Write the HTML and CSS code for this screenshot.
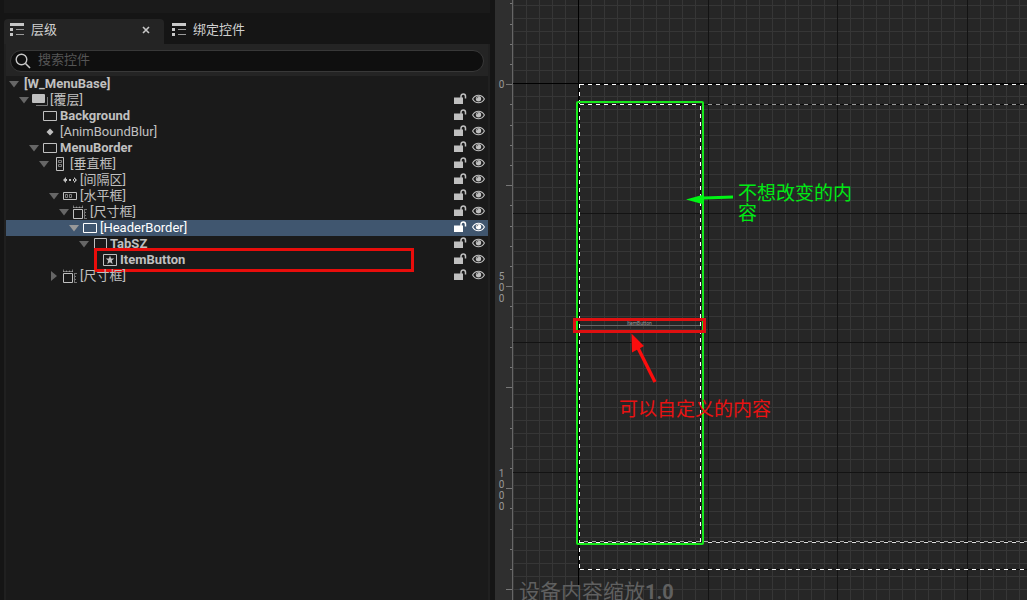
FILE: index.html
```html
<!DOCTYPE html>
<html lang="zh-CN">
<head>
<meta charset="utf-8">
<title>W_MenuBase</title>
<link rel="stylesheet" href="styles.css">
</head>
<body>
<svg class="defs" aria-hidden="true">
  <symbol id="list" viewBox="0 0 14 14"><path d="M0 0h14v3H0zM0 5h3v3H0zM0 10h3v3H0z" fill="#c8c8c8"/><path d="M6 6h8v1H6zM6 11h8v1H6z" fill="#999"/></symbol>
  <symbol id="down" viewBox="0 0 10 7"><path d="M0 0h10L5 6.500z" fill="currentColor"/></symbol>
  <symbol id="right" viewBox="0 0 10 10"><path d="M2 0v10l6-5z" fill="currentColor"/></symbol>
  <symbol id="border" viewBox="0 0 16 14"><path d="M1.500 2.500h13v9h-13z" fill="none" stroke="currentColor"/></symbol>
  <symbol id="overlay" viewBox="0 0 16 14"><rect y="1" width="13" height="9" rx="1" fill="currentColor"/><path d="M15.500 4v8.500H4" fill="none" stroke="#777"/></symbol>
  <symbol id="dot" viewBox="0 0 16 14"><path d="M8 3.500l3.500 3.500L8 10.500 4.500 7z" fill="currentColor"/></symbol>
  <symbol id="vbox" viewBox="0 0 16 14"><g fill="none" stroke="currentColor"><path d="M4.500.5h7v13h-7z"/><path d="M6.500 3.500h3v2h-3zM6.500 7.500h3v2h-3z" opacity=".6"/></g></symbol>
  <symbol id="hbox" viewBox="0 0 16 14"><g fill="none" stroke="currentColor"><path d="M1.500 3.500h13v7h-13z"/><path d="M3.500 5.500h2v3h-2zM7.500 5.500h2v3h-2z" opacity=".6"/></g></symbol>
  <symbol id="spacer" viewBox="0 0 16 14"><path d="M1 7l3-3v6zM15 7l-3-3v6zM3 6h2v2H3zM11 6h2v2h-2zM7 6h2v2H7z" fill="currentColor"/></symbol>
  <symbol id="sizebox" viewBox="0 0 16 14"><g fill="none" stroke="currentColor"><path d="M1.500 4.500h9v9h-9z"/><path d="M1.500 3V.5M4.500 3V1.500M7.500 3V1.500M10.500 3V.5M1 2.500h10M12.500 4v10M13 4.500h2M13 7.500h1M13 10.500h1M13 13.500h2" opacity=".55"/></g></symbol>
  <symbol id="frame" viewBox="0 0 16 14"><path d="M2.500 1.500h12v12h-12z" fill="none" stroke="currentColor"/></symbol>
  <symbol id="user" viewBox="0 0 16 14"><path d="M1.500 1.500h13v11h-13z" fill="none" stroke="currentColor"/><path d="M8 2.500l1.100 3 3.100.1-2.400 1.900.9 3.500L8 9.200 5.300 11l.9-3.500-2.400-1.900 3.100-.1z" fill="currentColor"/></symbol>
  <symbol id="lock" viewBox="0 0 13 11"><path d="M0 4.500h9V11H0z" fill="currentColor"/><path d="M7 5V3.200C7 1.600 8 .9 9.300.9s2.200.7 2.200 2.300v2.300" fill="none" stroke="currentColor" stroke-width="1.500"/></symbol>
  <symbol id="eye" viewBox="0 0 13 10"><path d="M.6 5C2 2.400 4 1.200 6.500 1.200S11 2.400 12.400 5C11 7.600 9 8.800 6.500 8.800S2 7.600.6 5z" fill="none" stroke="currentColor" stroke-width="1.100"/><circle cx="6.500" cy="4.800" r="2.700" fill="currentColor"/><path d="M4.800 4.400c.1-.9.700-1.500 1.600-1.600" fill="none" stroke="#333" stroke-width=".7"/></symbol>
</svg>

<main class="editor">
  <section class="side">
    <div class="strip"></div>
    <nav class="tabs">
      <div class="tab active">
        <button class="tab-name"><svg class="tab-icon"><use href="#list"/></svg>层级</button>
        <button class="close" aria-label="关闭"><svg class="close-icon" viewBox="0 0 8 8"><path d="M1 1l6 6M7 1L1 7" stroke="#c8c8c8" stroke-width="1.600"/></svg></button>
      </div>
      <div class="tab"><button class="tab-name"><svg class="tab-icon"><use href="#list"/></svg>绑定控件</button></div>
    </nav>
    <div class="panel">
      <label class="search">
        <svg class="search-icon" viewBox="0 0 16 16"><circle cx="6.500" cy="6.500" r="5.300" fill="none" stroke="#c8c8c8" stroke-width="1.400"/><path d="M10.500 10.500L15 15" stroke="#c8c8c8" stroke-width="1.600"/></svg>
        <input type="text" placeholder="搜索控件" aria-label="搜索控件">
      </label>
      <ul class="tree">
        <li class="row root"><svg class="arrow"><use href="#down"/></svg><b class="name">[W_MenuBase]</b></li>
        <li class="row l1"><svg class="arrow"><use href="#down"/></svg><svg class="icon"><use href="#overlay"/></svg><span class="name">[覆层]</span><button class="tool" aria-label="锁定"><svg class="lock"><use href="#lock"/></svg></button><button class="tool" aria-label="可视性"><svg class="eye"><use href="#eye"/></svg></button></li>
        <li class="row l2"><span class="arrow"></span><svg class="icon"><use href="#border"/></svg><b class="name">Background</b><button class="tool" aria-label="锁定"><svg class="lock"><use href="#lock"/></svg></button><button class="tool" aria-label="可视性"><svg class="eye"><use href="#eye"/></svg></button></li>
        <li class="row l2"><span class="arrow"></span><svg class="icon"><use href="#dot"/></svg><span class="name">[AnimBoundBlur]</span><button class="tool" aria-label="锁定"><svg class="lock"><use href="#lock"/></svg></button><button class="tool" aria-label="可视性"><svg class="eye"><use href="#eye"/></svg></button></li>
        <li class="row l2"><svg class="arrow"><use href="#down"/></svg><svg class="icon"><use href="#border"/></svg><b class="name">MenuBorder</b><button class="tool" aria-label="锁定"><svg class="lock"><use href="#lock"/></svg></button><button class="tool" aria-label="可视性"><svg class="eye"><use href="#eye"/></svg></button></li>
        <li class="row l3"><svg class="arrow"><use href="#down"/></svg><svg class="icon"><use href="#vbox"/></svg><span class="name">[垂直框]</span><button class="tool" aria-label="锁定"><svg class="lock"><use href="#lock"/></svg></button><button class="tool" aria-label="可视性"><svg class="eye"><use href="#eye"/></svg></button></li>
        <li class="row l4"><span class="arrow"></span><svg class="icon"><use href="#spacer"/></svg><span class="name">[间隔区]</span><button class="tool" aria-label="锁定"><svg class="lock"><use href="#lock"/></svg></button><button class="tool" aria-label="可视性"><svg class="eye"><use href="#eye"/></svg></button></li>
        <li class="row l4"><svg class="arrow"><use href="#down"/></svg><svg class="icon"><use href="#hbox"/></svg><span class="name">[水平框]</span><button class="tool" aria-label="锁定"><svg class="lock"><use href="#lock"/></svg></button><button class="tool" aria-label="可视性"><svg class="eye"><use href="#eye"/></svg></button></li>
        <li class="row l5"><svg class="arrow"><use href="#down"/></svg><svg class="icon"><use href="#sizebox"/></svg><span class="name">[尺寸框]</span><button class="tool" aria-label="锁定"><svg class="lock"><use href="#lock"/></svg></button><button class="tool" aria-label="可视性"><svg class="eye"><use href="#eye"/></svg></button></li>
        <li class="row l6 selected"><svg class="arrow"><use href="#down"/></svg><svg class="icon"><use href="#border"/></svg><span class="name">[HeaderBorder]</span><button class="tool" aria-label="锁定"><svg class="lock"><use href="#lock"/></svg></button><button class="tool" aria-label="可视性"><svg class="eye"><use href="#eye"/></svg></button></li>
        <li class="row l7"><svg class="arrow"><use href="#down"/></svg><svg class="icon"><use href="#frame"/></svg><b class="name">TabSZ</b><button class="tool" aria-label="锁定"><svg class="lock"><use href="#lock"/></svg></button><button class="tool" aria-label="可视性"><svg class="eye"><use href="#eye"/></svg></button></li>
        <li class="row l8"><span class="arrow"></span><svg class="icon"><use href="#user"/></svg><b class="name">ItemButton</b><button class="tool" aria-label="锁定"><svg class="lock"><use href="#lock"/></svg></button><button class="tool" aria-label="可视性"><svg class="eye"><use href="#eye"/></svg></button><span class="mark"></span></li>
        <li class="row l4"><svg class="arrow side-arrow"><use href="#right"/></svg><svg class="icon"><use href="#sizebox"/></svg><span class="name">[尺寸框]</span><button class="tool" aria-label="锁定"><svg class="lock"><use href="#lock"/></svg></button><button class="tool" aria-label="可视性"><svg class="eye"><use href="#eye"/></svg></button></li>
      </ul>
    </div>
  </section>

  <section class="canvas">
    <svg class="drawing" aria-hidden="true">
      <defs>
        <pattern id="grid" x="83" y="83" width="389" height="389" patternUnits="userSpaceOnUse">
          <path id="cols" stroke="#363636" d="M13.500 0v389M26.500 0v389M39.500 0v389M52.500 0v389M65.500 0v389M78.500 0v389M91.500 0v389M104.500 0v389M117.500 0v389M143.500 0v389M156.500 0v389M168.500 0v389M181.500 0v389M194.500 0v389M207.500 0v389M220.500 0v389M233.500 0v389M246.500 0v389M272.500 0v389M285.500 0v389M298.500 0v389M311.500 0v389M324.500 0v389M337.500 0v389M350.500 0v389M363.500 0v389M376.500 0v389"/>
          <use href="#cols" transform="matrix(0 1 1 0 0 0)"/>
          <path stroke="#131313" d="M.5 0v389M130.500 0v389M259.500 0v389M0 .5h389M0 130.500h389M0 259.500h389"/>
        </pattern>
        <pattern id="ticks" y="84" width="18" height="101" patternUnits="userSpaceOnUse">
          <path stroke="#777" d="M11 .5h6M15 20.500h2M15 41.500h2M15 61.500h2M15 81.500h2"/>
        </pattern>
      </defs>
      <rect width="100%" height="100%" fill="#262626"/>
      <rect width="100%" height="100%" fill="url(#grid)"/>
      <path d="M83.500 0v2000M18 83.500h3000" stroke="#000"/>
      <rect width="17" height="100%" fill="#2f2f2f"/>
      <rect width="18" height="100%" fill="url(#ticks)"/>
      <path d="M17.500 0v2000" stroke="#666"/>
      <g fill="none">
        <path d="M3000 84.500H84.500v485H3000M84.500 104.500H3000M84.500 541.500H3000M205.500 104v438" stroke="#0c0c0c"/>
        <path d="M85 84.500h3000M84.500 84v485M85 569.500h3000M85 104.500h120M205.500 106v436M85 542.500h120" stroke="#fff" stroke-dasharray="4 4"/>
        <path d="M213 104.500h3000" stroke="#999" stroke-dasharray="4 4"/>
        <path d="M85 541.500h3000" stroke="#aaa" stroke-dasharray="4 4" stroke-dashoffset="4"/>
        <path d="M213 542.500h3000" stroke="#ddd" stroke-dasharray="4 4"/>
        <path d="M85 325.500h120" stroke="#666"/>
        <rect x="82" y="102" width="126" height="442" rx="1" stroke="#18e71c" stroke-width="2"/>
        <rect x="79.500" y="319.500" width="130" height="12" stroke="#e01010" stroke-width="3"/>
      </g>
      <path d="M191 199.500l18-5v2l29-1v3l-29 1v5z" fill="#00f514"/>
      <path d="M136.500 333.500l12.500 12.500-4 2.200 16.500 33-3 1.500-16.500-33-5 2.800z" fill="#fb0d0d"/>
    </svg>
    <span class="ruler r0">0</span>
    <span class="ruler r500">500</span>
    <span class="ruler r1000">1000</span>
    <span class="preview">ItemButton</span>
    <p class="note keep">不想改变的内容</p>
    <p class="note custom">可以自定义的内容</p>
    <p class="scale">设备内容缩放<b>1.0</b></p>
  </section>
</main>
</body>
</html>
```
FILE: styles.css
```css
* { box-sizing: border-box; }
body {
  margin: 0;
  background: #151515;
  color: #c0c0c0;
  font: 13px/16px Roboto, "Noto Sans CJK SC", sans-serif;
}
button { padding: 0; border: 0; background: none; color: inherit; font: inherit; }
svg { display: block; }
.defs { position: absolute; width: 0; height: 0; }
.editor {
  display: grid;
  grid-template-columns: minmax(495px, 48%) 1fr;
  height: 100vh;
  overflow: hidden;
}

.side { display: flex; flex-direction: column; padding: 0 5px 0 4px; }
.strip { height: 13px; background: #1a1a1a; }
.tabs { display: flex; padding-top: 6px; }
.tab { display: flex; align-items: center; height: 25px; padding: 0 9px 3px 6px; }
.tab.active { width: 160px; background: #242424; border-radius: 4px 4px 0 0; justify-content: space-between; }
.tab + .tab { padding-left: 8px; }
.tab-name { display: flex; align-items: center; gap: 7px; color: #d0d0d0; }
.tab-icon { width: 14px; height: 14px; }
.close { padding: 5px; }
.close-icon { width: 8px; height: 8px; }

.panel { flex: 1; background: #1a1a1a; border: solid #202020; border-width: 0 2px; }
.search {
  display: flex;
  align-items: center;
  height: 32px;
  padding: 6px 4px 4px;
  background: #242424;
  position: relative;
}
.search-icon { position: absolute; left: 9px; top: 9px; width: 16px; height: 16px; }
.search input {
  width: 100%;
  height: 22px;
  padding: 0 12px 3px 27px;
  border: 1px solid #383838;
  border-radius: 11px;
  background: #0f0f0f;
  color: #c0c0c0;
  font: inherit;
  outline: none;
}
.search input::placeholder { color: #555; opacity: 1; }

.tree { margin: 0; padding: 0; list-style: none; }
.row { display: flex; align-items: center; height: 16px; padding-right: 3px; position: relative; }
.root { padding-left: 3px; }
.l1 { padding-left: 13px; }
.l2 { padding-left: 23px; }
.l3 { padding-left: 33px; }
.l4 { padding-left: 43px; }
.l5 { padding-left: 53px; }
.l6 { padding-left: 63px; }
.l7 { padding-left: 73px; }
.l8 { padding-left: 83px; }
.selected { background: #40566f; color: #fff; }
.arrow { width: 10px; height: 7px; margin-right: 3px; color: #666; flex: none; }
.side-arrow { height: 10px; }
.selected .arrow { color: #999; }
.icon { width: 16px; height: 14px; margin-right: 2px; flex: none; }
.name { flex: 1; white-space: nowrap; }
.root .name { padding-left: 2px; }
.tool { height: 16px; padding-bottom: 3px; margin-left: 5px; }
.lock { width: 13px; height: 11px; }
.eye { width: 13px; height: 10px; }
.mark {
  position: absolute;
  left: 88px;
  top: -4px;
  width: 320px;
  height: 24px;
  border: 3px solid #e90d0b;
}

.canvas { position: relative; overflow: hidden; }
.drawing { width: 100%; height: 100%; }
.ruler {
  position: absolute;
  left: 3px;
  width: 7px;
  color: #999;
  font-size: 10px;
  line-height: 11px;
  text-align: center;
  word-break: break-all;
}
.r0 { top: 79px; }
.r500 { top: 271px; }
.r1000 { top: 468px; }
.preview { position: absolute; left: 132px; top: 320px; color: #999; font-size: 5px; line-height: 6px; }
.note { position: absolute; margin: 0; font: 19px/20px "Noto Sans CJK SC", sans-serif; }
.keep { left: 243px; top: 182px; width: 116px; color: #00ea14; }
.custom { left: 124px; top: 398px; color: #e91212; white-space: nowrap; }
.scale { position: absolute; left: 24px; top: 580px; margin: 0; color: #606060; font-size: 21px; line-height: 24px; white-space: nowrap; }
.scale b { font-size: 20px; }
```
